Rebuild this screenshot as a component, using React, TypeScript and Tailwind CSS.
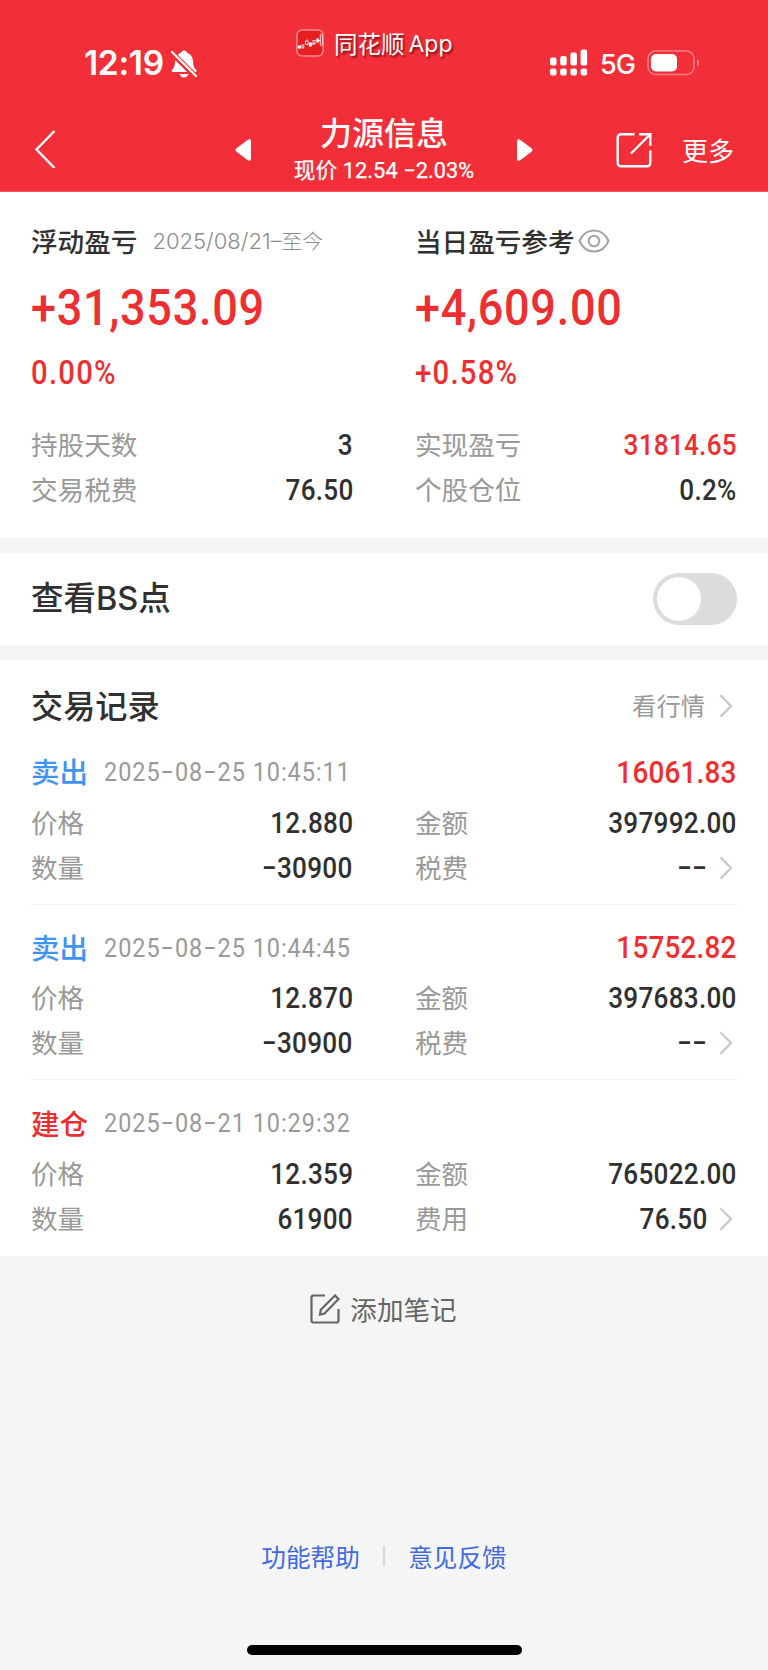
import React, { useState } from 'react';

interface Stat {
  label: string;
  value: string;
  red?: boolean;
  link?: boolean;
}

interface TradeRecord {
  type: string;
  buy?: boolean;
  time: string;
  profit?: string;
  stats: Stat[];
}

const summaryStats: Stat[] = [
  { label: '持股天数', value: '3' },
  { label: '实现盈亏', value: '31814.65', red: true },
  { label: '交易税费', value: '76.50' },
  { label: '个股仓位', value: '0.2%' },
];

const records: TradeRecord[] = [
  {
    type: '卖出',
    time: '2025−08−25 10:45:11',
    profit: '16061.83',
    stats: [
      { label: '价格', value: '12.880' },
      { label: '金额', value: '397992.00' },
      { label: '数量', value: '−30900' },
      { label: '税费', value: '−−', link: true },
    ],
  },
  {
    type: '卖出',
    time: '2025−08−25 10:44:45',
    profit: '15752.82',
    stats: [
      { label: '价格', value: '12.870' },
      { label: '金额', value: '397683.00' },
      { label: '数量', value: '−30900' },
      { label: '税费', value: '−−', link: true },
    ],
  },
  {
    type: '建仓',
    buy: true,
    time: '2025−08−21 10:29:32',
    stats: [
      { label: '价格', value: '12.359' },
      { label: '金额', value: '765022.00' },
      { label: '数量', value: '61900' },
      { label: '费用', value: '76.50', link: true },
    ],
  },
];

const ChevronRight = () => (
  <svg className="w-[14px] h-6 shrink-0 mr-[4px]" viewBox="0 0 14 24" fill="none" stroke="#c8c8c8" strokeWidth="2.300">
    <path d="M1.500 1.200L12 12L1.500 22.800" />
  </svg>
);

const StatRow: React.FC<{ stat: Stat }> = ({ stat }) => (
  <div className="h-[45px] flex items-center justify-between">
    <span className="text-[26.6px] text-[#999999] -mt-px">{stat.label}</span>
    <span className="flex items-center gap-[12px]">
      <span
        className={`font-['Roboto'] text-[29px] font-medium tracking-[0.3px] scale-x-90 origin-right mt-[1px] ${stat.red ? 'text-[#ee2f31]' : 'text-[#303030]'}`}
      >
        {stat.value}
      </span>
      {stat.link && <ChevronRight />}
    </span>
  </div>
);

const StatusBar = () => (
  <div className="h-[104px] flex justify-between">
    <div className="flex items-center pl-[84px] pt-[23px] w-[296px]">
      <span className="font-['Inter'] text-[33.5px] font-semibold tracking-[-0.3px] w-[80px] whitespace-nowrap">12:19</span>
      <svg className="w-[26px] h-7 ml-[7px]" viewBox="0 0 26 28" fill="white">
        <path d="M13 .5c1.700 0 2.800 1 3 2.300 3.700 1.200 5.700 4.300 6 8.200.2 4 .5 6.200 3.300 9 .6.8.2 2-1 2H2C.7 22 .2 20.800.9 20c2.800-2.800 3-5 3.200-9 .3-3.900 2.300-7 5.900-8.200C10.300 1.500 11.300.5 13 .5z" />
        <path d="M8.500 24h9c-.6 2.300-2.300 3.500-4.500 3.500S9.100 26.300 8.500 24z" />
        <path d="M-1 1L26 28" stroke="#f22f38" strokeWidth="5.500" />
        <path d="M1 2L25 26" stroke="white" strokeWidth="2.200" strokeLinecap="round" />
      </svg>
    </div>

    {/* Source app badge */}
    <div className="flex items-center gap-[10px] h-7 mt-[29px] w-[157px]">
      <svg className="w-7 h-7 shrink-0" viewBox="0 0 28 28" fill="none">
        <rect x=".9" y=".9" width="26.200" height="26.200" rx="5.500" fill="#e61e22" stroke="#f88b90" strokeWidth="1.500" />
        <path d="M1.500 18h3M11 10.500v1M16 15h3M21 11.500h3" stroke="white" />
        <rect x="2" y="16.500" width="3" height="3" fill="white" />
        <rect x="6" y="16" width="1.800" height="3" stroke="white" strokeWidth=".8" />
        <rect x="9.500" y="12" width="2.500" height="3.500" stroke="white" strokeWidth=".8" />
        <rect x="12.800" y="13.500" width="3" height="4" fill="white" />
        <rect x="17" y="11.500" width="2" height="3" stroke="white" strokeWidth=".8" />
        <rect x="20.300" y="9.500" width="2.500" height="4" fill="white" />
        <rect x="24.300" y="5.500" width="2" height="11" rx=".8" stroke="white" strokeWidth=".8" />
      </svg>
      <span className="flex items-center gap-[4px] text-[23.5px] whitespace-nowrap leading-7 [text-shadow:1.5px_2px_2px_rgba(90,0,0,0.7)]">
        同花顺
        <span className="font-['Inter'] text-[23px] mt-[1px]">App</span>
      </span>
    </div>

    <div className="flex items-center pt-[21px] w-[315px] pl-[97px]">
      <svg className="w-[38px] h-[27px]" viewBox="0 0 38 27" fill="white">
        <rect x="0" y="8.500" width="6.500" height="8" rx="2" />
        <rect x="10.200" y="7" width="6.500" height="9.500" rx="2" />
        <rect x="20.400" y="3.500" width="6.500" height="13" rx="2" />
        <rect x="30.600" y=".5" width="6.500" height="16" rx="2" />
        <rect x="0" y="19.500" width="6.500" height="7" rx="2" />
        <rect x="10.200" y="19.500" width="6.500" height="7" rx="2" />
        <rect x="20.400" y="19.500" width="6.500" height="7" rx="2" />
        <rect x="30.600" y="19.500" width="6.500" height="7" rx="2" />
      </svg>
      <span className="font-['Inter'] text-[27px] font-medium ml-[12px] mt-[3px] w-[35px] tracking-[-0.9px]">5G</span>
      <svg className="w-[54px] h-[26px] ml-[12px]" viewBox="0 0 54 26" fill="none">
        <rect x="1" y="1" width="46" height="23.500" rx="7.500" stroke="#f87f85" strokeWidth="1.600" />
        <rect x="4" y="4" width="26" height="17.500" rx="5" fill="white" />
        <path d="M50 9c2.700 1.500 2.700 6 0 7.500z" fill="#f87f85" />
      </svg>
    </div>
  </div>
);

const NavBar = () => (
  <div className="h-[88px] flex items-center">
    <svg className="w-[22px] h-10 ml-[34px]" viewBox="0 0 22 40" fill="none" stroke="white" strokeWidth="2.400">
      <path d="M20.500 3L2.500 21.500L20.500 40" />
    </svg>
    <svg className="w-4 h-[22px] ml-[179px] mt-[3px]" viewBox="0 0 16 22" fill="white">
      <path d="M13.200.6L1.500 9.300q-2 1.700 0 3.400l11.700 8.700q2.800 1.200 2.800-2v-17q0-3-2.800-1.800z" />
    </svg>
    <div className="w-[266px] flex flex-col items-center">
      <span className="text-[32px] font-medium leading-[42px] h-[42px] mt-[2px]">力源信息</span>
      <span className="font-['Roboto','Noto_Sans_CJK_SC'] text-[21.7px] leading-[38px] h-[36px] whitespace-nowrap tracking-[0.1px] [-webkit-text-stroke:0.25px_white]">
        现价 12.54 −2.03%
      </span>
    </div>
    <svg className="w-4 h-[22px] mt-[3px]" viewBox="0 0 16 22" fill="white">
      <path d="M2.800.6l11.700 8.700q2 1.700 0 3.400L2.800 21.400q-2.800 1.200-2.800-2v-17q0-3 2.800-1.800z" />
    </svg>
    <svg className="w-9 h-9 ml-[83px] mt-[4px]" viewBox="0 0 36 36" fill="none" stroke="white" strokeWidth="2.400">
      <path d="M18.500 2.200H5.500q-3.800 0-3.800 3.800v24.500q0 3.800 3.800 3.800h25q3.800 0 3.800-3.800V18.500" />
      <path d="M23 2.200h11.300v11.500M34 2.500L15 21.500" />
    </svg>
    <span className="text-[26px] leading-8 ml-[30px] mt-[3px]">更多</span>
  </div>
);

export default function App() {
  const [showBS, setShowBS] = useState(false);

  return (
    <div className="w-[768px] h-[1670px] flex flex-col bg-[#f5f5f5] font-['Noto_Sans_CJK_SC',sans-serif] leading-none overflow-hidden">
      <header className="h-[192px] shrink-0 bg-[#f22f38] text-white border-b border-[#ef545b]">
        <StatusBar />
        <NavBar />
      </header>

      {/* Profit summary */}
      <section className="h-[346px] shrink-0 bg-white px-[31px] pt-[29px]">
        <div className="grid grid-cols-2 gap-x-[62px]">
          <div>
            <div className="h-10 flex items-center">
              <span className="text-[26.6px] font-medium text-[#303030]">浮动盈亏</span>
              <span className="font-['Inter','Noto_Sans_CJK_SC'] text-[22px] font-light text-[#8c8c8c] ml-[15px] mt-px whitespace-nowrap">
                2025/08/21–<span className="text-[20.8px]">至今</span>
              </span>
            </div>
            <div className="h-[92px] flex items-center font-['Roboto'] text-[50px] font-medium tracking-[0.8px] scale-x-90 origin-left pt-[1px] text-[#ee2f31]">
              +31,353.09
            </div>
            <div className="h-10 flex items-center font-['Roboto'] text-[32.5px] font-medium tracking-[1.4px] scale-x-90 origin-left text-[#ee2f31]">
              0.00%
            </div>
          </div>
          <div>
            <div className="h-10 flex items-center">
              <span className="text-[26.6px] font-medium text-[#303030]">当日盈亏参考</span>
              <svg className="w-8 h-6 ml-[3px]" viewBox="0 0 32 24" fill="none" stroke="#a3a3a3" strokeWidth="2">
                <path d="M1.500 12C4.500 5 9.500 1.500 16 1.500S27.500 5 30.500 12C27.500 19 22.500 22.500 16 22.500S4.500 19 1.500 12z" />
                <circle cx="16" cy="12" r="5.300" />
              </svg>
            </div>
            <div className="h-[92px] flex items-center font-['Roboto'] text-[50px] font-medium tracking-[0.8px] scale-x-90 origin-left pt-[1px] text-[#ee2f31]">
              +4,609.00
            </div>
            <div className="h-10 flex items-center font-['Roboto'] text-[32.5px] font-medium tracking-[1.4px] scale-x-90 origin-left text-[#ee2f31]">
              +0.58%
            </div>
          </div>
        </div>
        <div className="grid grid-cols-2 gap-x-[62px] mt-[29px]">
          {summaryStats.map((stat) => (
            <StatRow key={stat.label} stat={stat} />
          ))}
        </div>
      </section>

      {/* BS point toggle */}
      <section className="h-[92px] shrink-0 mt-[15px] bg-white px-[31px] flex items-center justify-between">
        <span className="font-['Inter','Noto_Sans_CJK_SC'] text-[32.5px] font-medium text-[#303030] mt-px">查看BS点</span>
        <button
          onClick={() => setShowBS(!showBS)}
          className={`w-[84px] h-[52px] rounded-full p-1 flex items-center ${showBS ? 'justify-end bg-[#ee2f31]' : 'bg-[#dcdcdc]'}`}
        >
          <span className="w-11 h-11 rounded-full bg-white"></span>
        </button>
      </section>

      {/* Trade records */}
      <section className="h-[596px] shrink-0 mt-[15px] bg-white px-[31px] pt-[24px]">
        <div className="h-11 flex items-center justify-between">
          <h2 className="text-[32.2px] font-medium text-[#303030] -mt-[3px]">交易记录</h2>
          <div className="flex items-center gap-[14px]">
            <span className="text-[24.3px] text-[#999999] -mt-[1px]">看行情</span>
            <ChevronRight />
          </div>
        </div>
        <div className="mt-[1px]">
          {records.map((record) => (
            <div key={record.time} className="h-[175.670px] pt-[20px] border-b border-[#f3f3f3] last:border-b-0">
              <div className="h-[46px] flex items-center mb-[5px]">
                <span
                  className={`text-[28.500px] font-medium -mt-[1px] ${record.buy ? 'text-[#ee2f31]' : 'text-[#4092f5]'}`}
                >
                  {record.type}
                </span>
                <span className="font-['Roboto'] text-[26px] text-[#999999] ml-[15.5px] tracking-[1.1px] scale-x-90 origin-left whitespace-nowrap">
                  {record.time}
                </span>
                <span className="font-['Roboto'] text-[31px] font-medium tracking-[0.2px] scale-x-90 origin-right text-[#ee2f31] ml-auto">
                  {record.profit}
                </span>
              </div>
              <div className="grid grid-cols-2 gap-x-[62px]">
                {record.stats.map((stat) => (
                  <StatRow key={stat.label} stat={stat} />
                ))}
              </div>
            </div>
          ))}
        </div>
      </section>

      <button className="h-[106px] shrink-0 flex items-center justify-center gap-[10px] pr-[1px] text-[#666666]">
        <svg className="w-[30px] h-[30px]" viewBox="0 0 30 30" fill="none" stroke="#666666" strokeWidth="2.200">
          <path d="M15 1.500H3.500q-2 0-2 2v23q0 2 2 2h23q2 0 2-2V15" />
          <path d="M25 1.500l3.500 3.500L14.500 19.500L10 20.500l.8-4.800z" />
        </svg>
        <span className="text-[26.6px]">添加笔记</span>
      </button>

      <footer className="mt-[174px] flex items-center justify-center h-10 text-[24.6px] text-[#4169e1]">
        <a>功能帮助</a>
        <span className="w-[1.500px] h-5 bg-[#d8d8d8] mx-[23.500px]"></span>
        <a>意见反馈</a>
      </footer>
      <div className="w-[275px] h-[10px] shrink-0 rounded-full bg-black mx-auto mt-[69px]"></div>
    </div>
  );
}
